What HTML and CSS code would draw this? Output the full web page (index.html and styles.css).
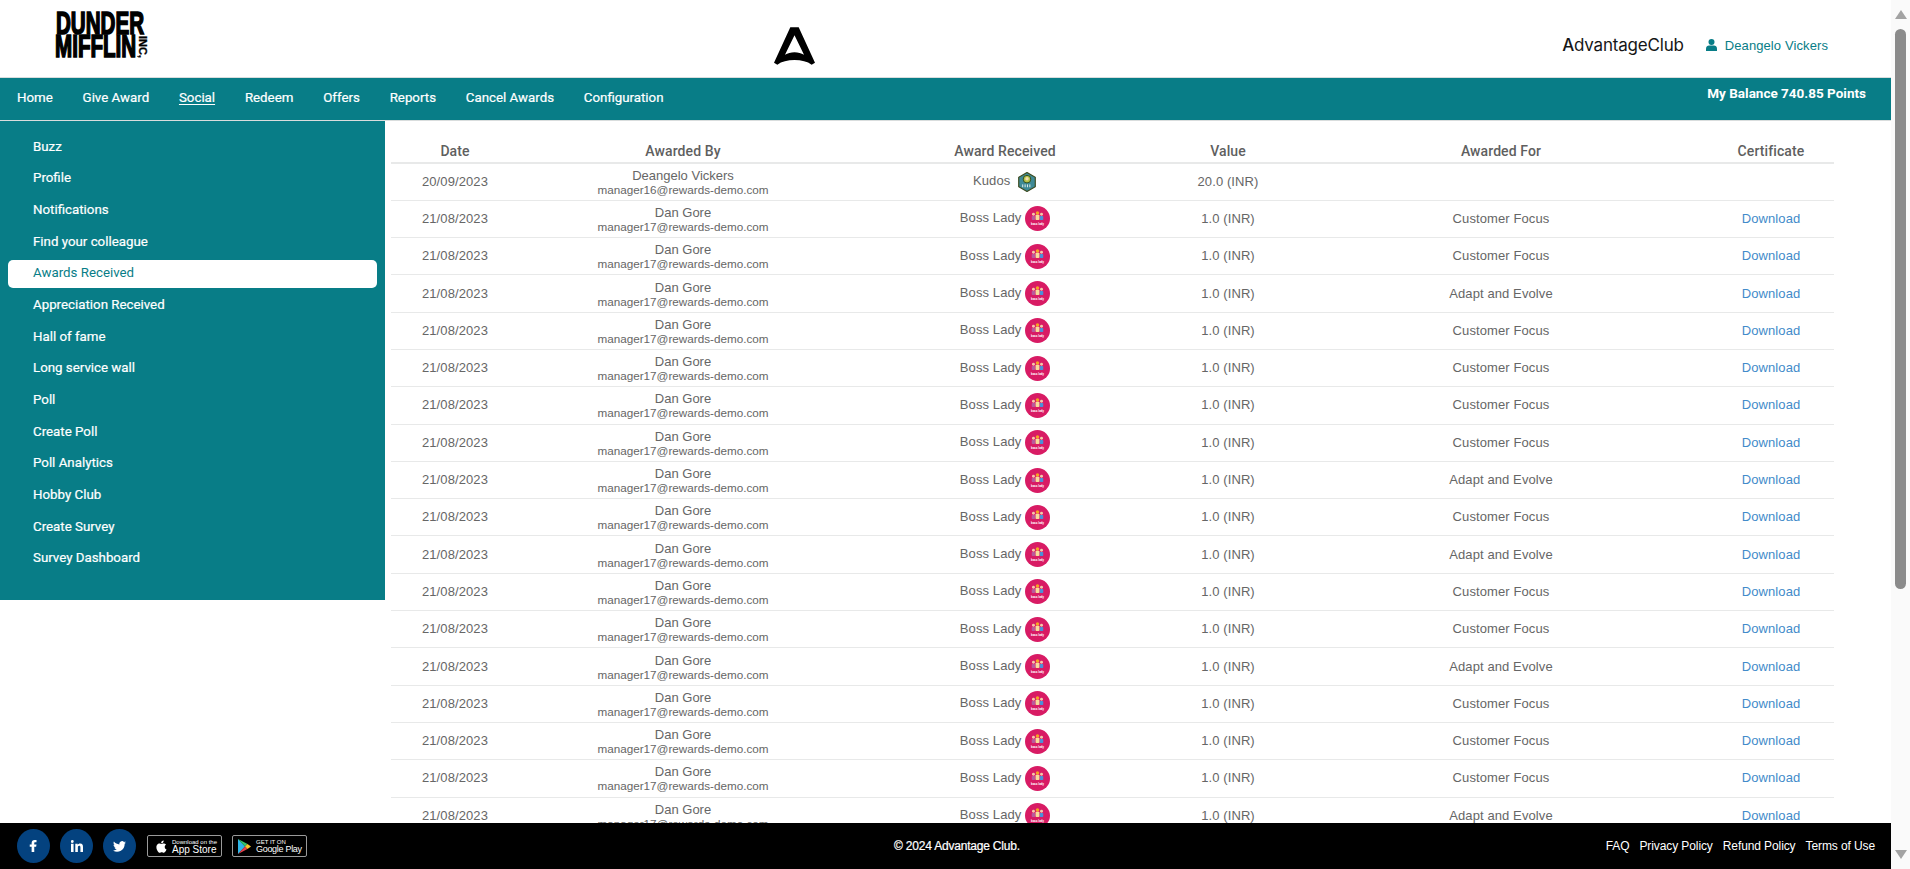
FILE: index.html
```html
<!DOCTYPE html>
<html>
<head>
  <title>Awards Received</title>
  <link rel="stylesheet" href="styles.css">
</head>
<body>
  <div class="page">
    <div class="header">
      <div class="brand-logo">
        <svg width="100" height="72" viewBox="0 0 100 72">
          <text class="dm-text" transform="translate(1 34) scale(1 1.550)">DUNDER</text>
          <text class="dm-text" transform="translate(0 57) scale(1 1.550)">MIFFLIN</text>
          <text class="dm-inc" x="88" y="36">INC,</text>
        </svg>
      </div>
      <div class="center-logo">
        <svg width="41" height="40" viewBox="0 0 44 42">
          <path d="M17.500 1h9L44 39l-3.600 2c-4.500-3.400-11-5-18.400-5s-13.900 1.600-18.400 5L0 39z M22 9.500L11.800 30.500c3-1.600 6.200-2.700 10.200-2.700s7.200 1.100 10.200 2.700z" fill="#000" fill-rule="evenodd"/>
        </svg>
      </div>
      <div class="header-right">
        <span class="wordmark"><b>A</b>dvantageClub</span>
        <span class="user-name">
          <svg width="11" height="12" viewBox="0 0 11 12"><circle cx="5.500" cy="3" r="3" fill="#087d87"/><path d="M0 12V9.500C0 7.500 1.500 6.500 3 6.500h5c1.500 0 3 1 3 3V12z" fill="#087d87"/></svg>
          Deangelo Vickers
        </span>
      </div>
    </div>

    <div class="navbar">
      <div class="nav-links">
        <a>Home</a>
        <a>Give Award</a>
        <a class="current">Social</a>
        <a>Redeem</a>
        <a>Offers</a>
        <a>Reports</a>
        <a>Cancel Awards</a>
        <a>Configuration</a>
      </div>
      <div class="balance">My Balance 740.85 Points</div>
    </div>

    <div class="main">
      <div class="sidebar">
        <a>Buzz</a>
        <a>Profile</a>
        <a>Notifications</a>
        <a>Find your colleague</a>
        <a class="active">Awards Received</a>
        <a>Appreciation Received</a>
        <a>Hall of fame</a>
        <a>Long service wall</a>
        <a>Poll</a>
        <a>Create Poll</a>
        <a>Poll Analytics</a>
        <a>Hobby Club</a>
        <a>Create Survey</a>
        <a>Survey Dashboard</a>
      </div>

      <div class="content">
        <table class="awards">
          <colgroup>
            <col class="c-date"><col class="c-by"><col class="c-award"><col class="c-value"><col class="c-for"><col class="c-cert">
          </colgroup>
          <thead>
            <tr><th>Date</th><th>Awarded By</th><th>Award Received</th><th>Value</th><th>Awarded For</th><th>Certificate</th></tr>
          </thead>
          <tbody>
            <tr>
              <td>20/09/2023</td>
              <td class="by">Deangelo Vickers<small>manager16@rewards-demo.com</small></td>
              <td>Kudos <svg class="badge-kudos" width="20" height="20" viewBox="0 0 21 21"><use href="#kudos"/></svg></td>
              <td>20.0 (INR)</td><td></td><td></td>
            </tr>
            <tr><td>21/08/2023</td><td class="by">Dan Gore<small>manager17@rewards-demo.com</small></td><td>Boss Lady <svg class="badge" width="25" height="25" viewBox="0 0 26 26"><use href="#boss"/><text class="boss-text" x="13" y="19.500">boss lady</text></svg></td><td>1.0 (INR)</td><td>Customer Focus</td><td><a class="dl">Download</a></td></tr>
            <tr><td>21/08/2023</td><td class="by">Dan Gore<small>manager17@rewards-demo.com</small></td><td>Boss Lady <svg class="badge" width="25" height="25" viewBox="0 0 26 26"><use href="#boss"/><text class="boss-text" x="13" y="19.500">boss lady</text></svg></td><td>1.0 (INR)</td><td>Customer Focus</td><td><a class="dl">Download</a></td></tr>
            <tr><td>21/08/2023</td><td class="by">Dan Gore<small>manager17@rewards-demo.com</small></td><td>Boss Lady <svg class="badge" width="25" height="25" viewBox="0 0 26 26"><use href="#boss"/><text class="boss-text" x="13" y="19.500">boss lady</text></svg></td><td>1.0 (INR)</td><td>Adapt and Evolve</td><td><a class="dl">Download</a></td></tr>
            <tr><td>21/08/2023</td><td class="by">Dan Gore<small>manager17@rewards-demo.com</small></td><td>Boss Lady <svg class="badge" width="25" height="25" viewBox="0 0 26 26"><use href="#boss"/><text class="boss-text" x="13" y="19.500">boss lady</text></svg></td><td>1.0 (INR)</td><td>Customer Focus</td><td><a class="dl">Download</a></td></tr>
            <tr><td>21/08/2023</td><td class="by">Dan Gore<small>manager17@rewards-demo.com</small></td><td>Boss Lady <svg class="badge" width="25" height="25" viewBox="0 0 26 26"><use href="#boss"/><text class="boss-text" x="13" y="19.500">boss lady</text></svg></td><td>1.0 (INR)</td><td>Customer Focus</td><td><a class="dl">Download</a></td></tr>
            <tr><td>21/08/2023</td><td class="by">Dan Gore<small>manager17@rewards-demo.com</small></td><td>Boss Lady <svg class="badge" width="25" height="25" viewBox="0 0 26 26"><use href="#boss"/><text class="boss-text" x="13" y="19.500">boss lady</text></svg></td><td>1.0 (INR)</td><td>Customer Focus</td><td><a class="dl">Download</a></td></tr>
            <tr><td>21/08/2023</td><td class="by">Dan Gore<small>manager17@rewards-demo.com</small></td><td>Boss Lady <svg class="badge" width="25" height="25" viewBox="0 0 26 26"><use href="#boss"/><text class="boss-text" x="13" y="19.500">boss lady</text></svg></td><td>1.0 (INR)</td><td>Customer Focus</td><td><a class="dl">Download</a></td></tr>
            <tr><td>21/08/2023</td><td class="by">Dan Gore<small>manager17@rewards-demo.com</small></td><td>Boss Lady <svg class="badge" width="25" height="25" viewBox="0 0 26 26"><use href="#boss"/><text class="boss-text" x="13" y="19.500">boss lady</text></svg></td><td>1.0 (INR)</td><td>Adapt and Evolve</td><td><a class="dl">Download</a></td></tr>
            <tr><td>21/08/2023</td><td class="by">Dan Gore<small>manager17@rewards-demo.com</small></td><td>Boss Lady <svg class="badge" width="25" height="25" viewBox="0 0 26 26"><use href="#boss"/><text class="boss-text" x="13" y="19.500">boss lady</text></svg></td><td>1.0 (INR)</td><td>Customer Focus</td><td><a class="dl">Download</a></td></tr>
            <tr><td>21/08/2023</td><td class="by">Dan Gore<small>manager17@rewards-demo.com</small></td><td>Boss Lady <svg class="badge" width="25" height="25" viewBox="0 0 26 26"><use href="#boss"/><text class="boss-text" x="13" y="19.500">boss lady</text></svg></td><td>1.0 (INR)</td><td>Adapt and Evolve</td><td><a class="dl">Download</a></td></tr>
            <tr><td>21/08/2023</td><td class="by">Dan Gore<small>manager17@rewards-demo.com</small></td><td>Boss Lady <svg class="badge" width="25" height="25" viewBox="0 0 26 26"><use href="#boss"/><text class="boss-text" x="13" y="19.500">boss lady</text></svg></td><td>1.0 (INR)</td><td>Customer Focus</td><td><a class="dl">Download</a></td></tr>
            <tr><td>21/08/2023</td><td class="by">Dan Gore<small>manager17@rewards-demo.com</small></td><td>Boss Lady <svg class="badge" width="25" height="25" viewBox="0 0 26 26"><use href="#boss"/><text class="boss-text" x="13" y="19.500">boss lady</text></svg></td><td>1.0 (INR)</td><td>Customer Focus</td><td><a class="dl">Download</a></td></tr>
            <tr><td>21/08/2023</td><td class="by">Dan Gore<small>manager17@rewards-demo.com</small></td><td>Boss Lady <svg class="badge" width="25" height="25" viewBox="0 0 26 26"><use href="#boss"/><text class="boss-text" x="13" y="19.500">boss lady</text></svg></td><td>1.0 (INR)</td><td>Adapt and Evolve</td><td><a class="dl">Download</a></td></tr>
            <tr><td>21/08/2023</td><td class="by">Dan Gore<small>manager17@rewards-demo.com</small></td><td>Boss Lady <svg class="badge" width="25" height="25" viewBox="0 0 26 26"><use href="#boss"/><text class="boss-text" x="13" y="19.500">boss lady</text></svg></td><td>1.0 (INR)</td><td>Customer Focus</td><td><a class="dl">Download</a></td></tr>
            <tr><td>21/08/2023</td><td class="by">Dan Gore<small>manager17@rewards-demo.com</small></td><td>Boss Lady <svg class="badge" width="25" height="25" viewBox="0 0 26 26"><use href="#boss"/><text class="boss-text" x="13" y="19.500">boss lady</text></svg></td><td>1.0 (INR)</td><td>Customer Focus</td><td><a class="dl">Download</a></td></tr>
            <tr><td>21/08/2023</td><td class="by">Dan Gore<small>manager17@rewards-demo.com</small></td><td>Boss Lady <svg class="badge" width="25" height="25" viewBox="0 0 26 26"><use href="#boss"/><text class="boss-text" x="13" y="19.500">boss lady</text></svg></td><td>1.0 (INR)</td><td>Customer Focus</td><td><a class="dl">Download</a></td></tr>
            <tr><td>21/08/2023</td><td class="by">Dan Gore<small>manager17@rewards-demo.com</small></td><td>Boss Lady <svg class="badge" width="25" height="25" viewBox="0 0 26 26"><use href="#boss"/><text class="boss-text" x="13" y="19.500">boss lady</text></svg></td><td>1.0 (INR)</td><td>Adapt and Evolve</td><td><a class="dl">Download</a></td></tr>
          </tbody>
        </table>
      </div>
    </div>

    <div class="footer">
      <div class="footer-left">
        <span class="social"><svg width="9" height="12" viewBox="0 0 12 16"><path d="M3.500 16V9H1V6h2.500V4c0-2.500 1.500-4 3.800-4H10v3H8.300C7.300 3 7 3.500 7 4.300V6h3l-.5 3H7v7z" fill="#fff"/></svg></span>
        <span class="social"><svg width="12" height="12" viewBox="0 0 14 14"><path d="M0 4.500h3V14H0zM1.500 0a1.700 1.700 0 1 1 0 3.400 1.700 1.700 0 0 1 0-3.400zM5 4.500h2.800v1.300C8.300 5 9.300 4.200 10.800 4.200c2.400 0 3.200 1.600 3.200 4V14h-3V8.800c0-1.200-.3-2-1.400-2-1.200 0-1.600.9-1.600 2V14H5z" fill="#fff"/></svg></span>
        <span class="social"><svg width="13" height="11" viewBox="0 0 24 20"><path d="M24 2.400c-.9.400-1.800.7-2.800.8 1-.6 1.800-1.600 2.200-2.700-1 .6-2 1-3.100 1.200A4.900 4.900 0 0 0 11.900 6.200C7.800 6 4.200 4 1.700.9c-1.300 2.200-.7 5.100 1.500 6.600-.8 0-1.600-.2-2.200-.6 0 2.400 1.700 4.400 3.900 4.900-.7.200-1.500.2-2.200.1.600 2 2.400 3.400 4.600 3.400A9.900 9.900 0 0 1 0 17.300 14 14 0 0 0 21.500 5c1-.7 1.800-1.600 2.500-2.600z" fill="#fff"/></svg></span>
        <span class="store apple">
          <svg width="13" height="15" viewBox="0 0 13 15"><path d="M10.700 8c0-1.500 1.200-2.200 1.300-2.300-.7-1-1.800-1.200-2.200-1.200-1-.1-1.800.6-2.300.6s-1.200-.6-2-.6C4.400 4.500 3.400 5.100 2.900 6c-1.100 1.900-.3 4.700.8 6.200.5.800 1.100 1.600 2 1.600.8 0 1.100-.5 2-.5s1.200.5 2 .5 1.400-.8 1.900-1.500c.6-.9.800-1.700.9-1.800-.1 0-1.800-.7-1.800-2.500zM9.100 3.400c.4-.5.700-1.300.6-2-.6 0-1.400.4-1.900.9-.4.500-.8 1.300-.7 2 .7.100 1.500-.3 2-.9z" fill="#fff"/></svg>
          <span class="store-text"><small>Download on the</small>App Store</span>
        </span>
        <span class="store play">
          <svg width="13" height="15" viewBox="0 0 13 15"><path d="M0 0l7 7.500L0 15z" fill="#2fb6e8"/><path d="M0 0l9.500 5L7 7.500z" fill="#35c46b"/><path d="M0 15l9.500-5L7 7.500z" fill="#e8414b"/><path d="M9.500 5L13 7.500 9.500 10 7 7.500z" fill="#fbc72c"/></svg>
          <span class="store-text"><small>GET IT ON</small>Google Play</span>
        </span>
      </div>
      <div class="copyright">© 2024 Advantage Club.</div>
      <div class="footer-links">
        <a>FAQ</a><a>Privacy Policy</a><a>Refund Policy</a><a>Terms of Use</a>
      </div>
    </div>
  </div>

  <div class="scrollbar">
    <span class="arrow-up"></span>
    <div class="thumb-track"><div class="thumb"></div></div>
    <span class="arrow-down"></span>
  </div>

  <svg class="defs" width="0" height="0">
    <symbol id="kudos" viewBox="0 0 21 21">
      <path d="M10.500 .5l8.700 5v10l-8.700 5-8.700-5v-10z" fill="#3f8a96" stroke="#3d4a1e" stroke-width="1.200"/>
      <circle cx="10.500" cy="7.500" r="4" fill="#b7c34a" stroke="#2c4a1c"/>
      <circle cx="10.500" cy="7" r="1.800" fill="#f2dcb0"/>
      <path d="M6 13v3M8.500 13v3M11 13v3M13.500 13v3" stroke="#e8f0f0" stroke-width="1"/>
    </symbol>
    <symbol id="boss" viewBox="0 0 26 26">
      <circle cx="13" cy="13" r="13" fill="#d81b64"/>
      <circle cx="8.800" cy="8.600" r="1.500" fill="#f4c9a8"/><rect x="7" y="10.400" width="3.600" height="4.100" rx=".8" fill="#b85a9c"/>
      <circle cx="17.200" cy="8.600" r="1.500" fill="#f4c9a8"/><rect x="15.400" y="10.400" width="3.600" height="4.100" rx=".8" fill="#4a90d9"/>
      <circle cx="13" cy="7.200" r="1.800" fill="#f6a623"/><rect x="11" y="9.200" width="4" height="5.300" rx=".8" fill="#f7dc9a"/>
    </symbol>
  </svg>
</body>
</html>
```

FILE: styles.css
```css
* {
  box-sizing: border-box;
}

html, body {
  margin: 0;
  height: 100%;
  overflow: hidden;
}

body {
  display: flex;
  font-family: Roboto, "Liberation Sans", sans-serif;
  font-size: 14px;
  color: #666;
  background: #fff;
}

.page {
  width: 1891px;
  height: 869px;
  display: flex;
  flex-direction: column;
  position: relative;
  overflow: hidden;
}

/* header */
.header {
  height: 78px;
  flex: none;
  display: flex;
  align-items: flex-start;
  border-bottom: 1px solid #d9dddd;
}

.brand-logo {
  width: 774px;
  padding-left: 55px;
}

.brand-logo svg, .center-logo svg {
  display: block;
}

.dm-text {
  font-family: "Liberation Sans", sans-serif;
  font-weight: bold;
  font-size: 20.600px;
  fill: #000;
  stroke: #000;
  stroke-width: 1.100px;
}

.dm-inc {
  font-family: "Liberation Sans", sans-serif;
  font-weight: bold;
  font-size: 11px;
  writing-mode: vertical-rl;
  fill: #000;
  stroke: #000;
  stroke-width: .3px;
}

.center-logo {
  padding-top: 26px;
}

.header-right {
  margin-left: auto;
  padding: 33px 63px 0 0;
  display: flex;
  align-items: center;
}

.wordmark {
  font-family: Inter, sans-serif;
  font-size: 17px;
  letter-spacing: -.2px;
  line-height: 24px;
  color: #161616;
  margin-right: 22px;
}

.wordmark b {
  font-weight: 500;
}

.user-name {
  color: #087d87;
  font-family: "Liberation Sans", sans-serif;
  font-size: 13px;
  letter-spacing: .1px;
  display: flex;
  align-items: center;
  gap: 8px;
}

/* navbar */
.navbar {
  height: 43px;
  flex: none;
  background: #087d87;
  border-bottom: 1px solid #d9dddd;
  display: flex;
  justify-content: space-between;
  color: #fff;
}

.nav-links {
  display: flex;
  gap: 29.800px;
  padding: 11px 0 0 17px;
}

.nav-links a {
  font-size: 13.300px;
  line-height: 17px;
  height: 17px;
  -webkit-text-stroke: .2px #fff;
}

.nav-links a.current {
  text-decoration: underline;
  text-underline-offset: 2px;
}

.balance {
  padding: 7px 25px 0 0;
  font-weight: 700;
  font-size: 13.500px;
  line-height: 17px;
}

/* sidebar and table */
.main {
  flex: 1;
  display: flex;
  align-items: flex-start;
  overflow: hidden;
}

.sidebar {
  width: 385px;
  flex: none;
  height: 479px;
  padding: 12px 8px 0;
  background: #087d87;
  display: flex;
  flex-direction: column;
}

.sidebar a {
  height: 28px;
  margin-bottom: 3.700px;
  padding: 4.500px 0 0 25px;
  color: #fff;
  font-size: 13.300px;
  line-height: 17px;
  border-radius: 5px;
  -webkit-text-stroke: .2px #fff;
}

.sidebar a.active {
  background: #fff;
  color: #087d87;
  -webkit-text-stroke: 0;
}

.content {
  flex: 1;
  padding: 12px 0 0 6px;
}

.awards {
  width: 1443px;
  border-collapse: collapse;
  table-layout: fixed;
  text-align: center;
}

.c-date { width: 128px; }
.c-by { width: 328px; }
.c-award { width: 306px; }
.c-value { width: 150px; }
.c-for { width: 396px; }
.c-cert { width: 135px; }

.awards th {
  height: 30px;
  padding: 7px 0 0;
  font-size: 14px;
  font-weight: 500;
  color: #5f5f5f;
  letter-spacing: .1px;
  border-bottom: 2px solid #e8e9e9;
}

.awards td {
  height: 37.300px;
  padding: 0;
  font-family: "Liberation Sans", sans-serif;
  font-size: 13px;
  line-height: 14px;
  letter-spacing: .1px;
  border-bottom: 1px solid #e8e9e9;
}

.awards th:nth-child(3), .awards td:nth-child(3) {
  padding-left: 10px;
}

.awards th:nth-child(6), .awards td:nth-child(6) {
  padding-left: 9px;
}

.awards td.by {
  letter-spacing: 0;
  padding-top: 2px;
}

.awards td small {
  display: block;
  font-size: 11.700px;
}

.badge, .badge-kudos {
  vertical-align: middle;
}

.badge-kudos {
  margin-left: 3px;
}

.boss-text {
  font-family: Roboto, sans-serif;
  font-size: 3px;
  font-weight: 700;
  fill: #fff;
  text-anchor: middle;
}

.dl {
  color: #428bca;
}

.defs {
  position: absolute;
}

/* footer sits over the table */
.footer {
  position: absolute;
  left: 0;
  right: 0;
  bottom: 0;
  height: 46px;
  background: #000;
  color: #fff;
  display: flex;
  align-items: center;
  justify-content: space-between;
  padding: 0 16px 0 17px;
}

.footer-left {
  display: flex;
  align-items: center;
  width: 700px;
}

.social {
  width: 33px;
  height: 34px;
  margin-right: 10px;
  border-radius: 50%;
  background: #04427f;
  display: flex;
  align-items: center;
  justify-content: center;
}

.store {
  height: 22px;
  width: 75px;
  border: 1px solid #9a9a9a;
  border-radius: 2px;
  display: flex;
  align-items: center;
  padding: 0 0 0 6px;
  gap: 5px;
}

.apple {
  margin-left: 1px;
}

.play {
  margin-left: 10px;
  padding-left: 5px;
}

.store-text {
  font-family: "Liberation Sans", sans-serif;
  font-size: 10px;
  line-height: 9px;
  white-space: nowrap;
}

.play .store-text {
  font-size: 9px;
  letter-spacing: -.3px;
}

.store-text small {
  display: block;
  font-size: 6px;
  line-height: 6px;
  letter-spacing: 0;
}

.copyright {
  font-family: "Liberation Sans", sans-serif;
  font-size: 12px;
  letter-spacing: -.2px;
  flex: 1;
  padding-left: 177px;
  -webkit-text-stroke: .2px #fff;
}

.footer-links {
  display: flex;
  gap: 10px;
  font-family: "Liberation Sans", sans-serif;
  font-size: 12px;
  letter-spacing: -.1px;
}

/* scrollbar strip */
.scrollbar {
  width: 19px;
  height: 869px;
  flex: none;
  background: #fafafa;
  display: flex;
  flex-direction: column;
  align-items: center;
  padding: 10px 0;
}

.arrow-up {
  width: 0;
  height: 0;
  border: 6.500px solid transparent;
  border-top: 0;
  border-bottom: 9px solid #a3a3a3;
}

.arrow-down {
  width: 0;
  height: 0;
  border: 6.500px solid transparent;
  border-bottom: 0;
  border-top: 9px solid #a3a3a3;
}

.thumb-track {
  flex: 1;
  width: 100%;
  padding: 10px 4px 0;
}

.thumb {
  height: 560px;
  background: #8b8b8b;
  border-radius: 6px;
}
```
